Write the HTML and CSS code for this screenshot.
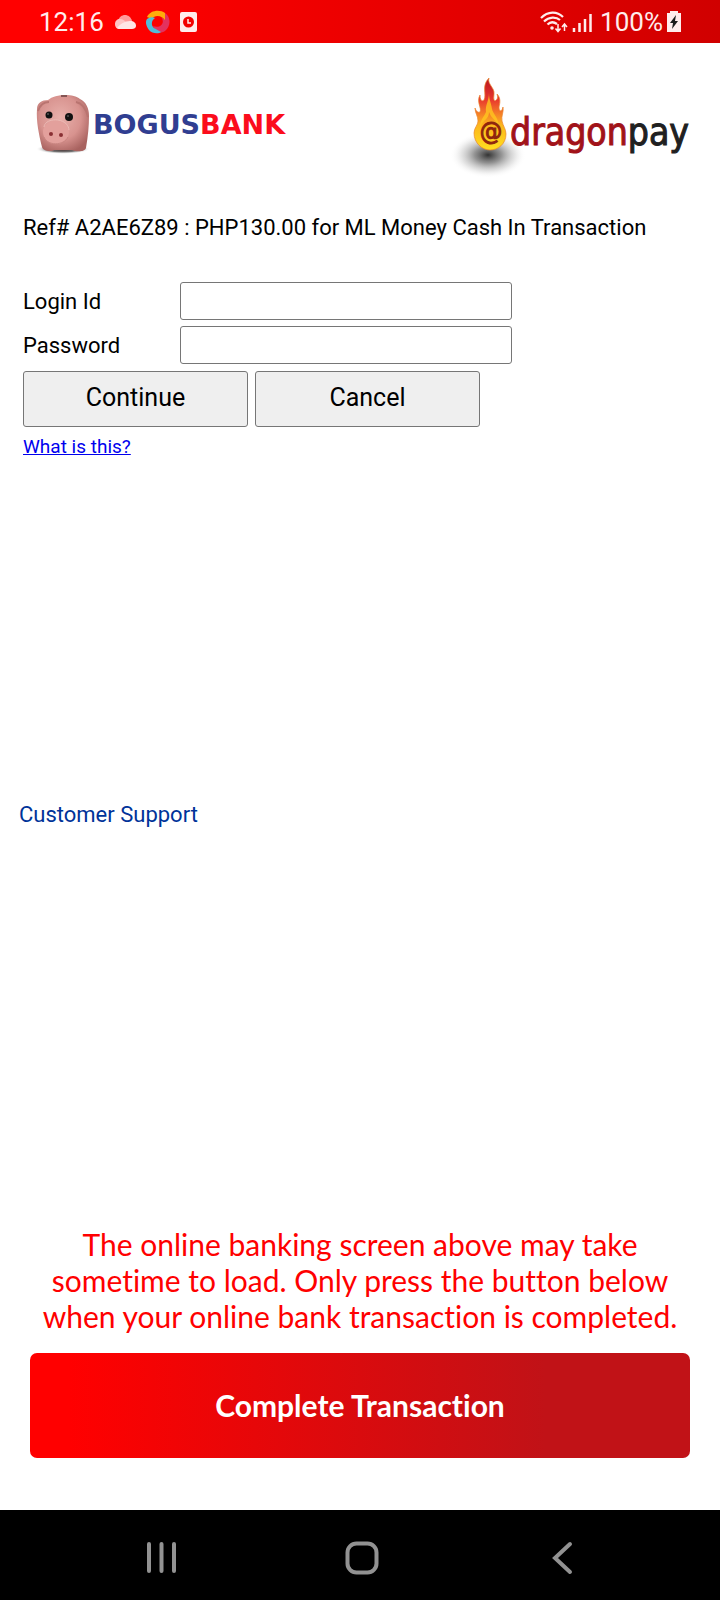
FILE: index.html
```html
<!DOCTYPE html>
<html lang="en">
<head>
<meta charset="utf-8">
<meta name="viewport" content="width=device-width, initial-scale=1">
<title>Bogus Bank - Dragonpay</title>
<link rel="stylesheet" href="styles.css">
</head>
<body>
<div class="status">
  <div class="status-left">
    <span>12:16</span>
    <svg width="22" height="16" viewBox="0 0 22 16" aria-hidden="true">
      <path d="M4 7C5 3 8 1 11 1s6 2 7 6l-7 5z" fill="#ff9b9b"/>
      <path d="M1 10c0-3 2-5 5-5 3 0 5 2 7 4l-8 6c-3 0-4-3-4-5z" fill="#ffc4c4"/>
      <path d="M3 14c3-4 8-7 13-7 4 0 6 2 6 5 0 2-2 3-4 3H5z" fill="#ffe6e6"/>
    </svg>
    <svg width="24" height="24" viewBox="0 0 24 24" aria-hidden="true">
      <path d="M1 7C4 0 14-1 19 3l0 8C17 6 9 4 6 9z" fill="#ffac0b"/>
      <path d="M19 3c6 4 6 13 0 18-3 2-6 2-8 1l-4-6c7 3 13-3 8-9l4 3z" fill="#e3325f"/>
      <path d="M1 9c3-2 6-2 8-1-4 3-4 7-1 10l7 4c-2 2-9 2-12-2C0 16-1 12 1 9z" fill="#50bdd8"/>
    </svg>
    <svg width="17" height="20" viewBox="0 0 17 20" aria-hidden="true">
      <rect width="17" height="20" rx="2" fill="#ffecec"/>
      <circle cx="8.500" cy="10" r="5.500" fill="#f20000"/>
      <path d="M8 7v4h3" fill="none" stroke="#ffecec" stroke-width="1.500"/>
    </svg>
  </div>
  <div class="status-right">
    <svg width="52" height="22" viewBox="0 0 52 22" aria-hidden="true" fill="none" stroke="#ffecec" stroke-width="2.200">
      <path d="M1 7C8 0 17 0 23 6M4 10.500C9 5.500 16 5.500 20 9M7.500 13.500c3-3 6-3 9.500-.500"/>
      <circle cx="12" cy="17" r="1.800" fill="#ffecec" stroke="none"/>
      <path d="M18 13v7M15.500 17.500l2.500 3 2.500-3M24.500 20v-7M22 16l2.500-3 2.500 3" stroke-width="1.500"/>
      <path d="M34 21v-4M39.500 21v-9M45 21V8M50.500 21V3" stroke-width="2.500"/>
    </svg>
    <span>100%</span>
    <svg class="battery" width="14" height="21" viewBox="0 0 14 21" aria-hidden="true">
      <path d="M3 0h8v2h3v19H0V2h3z" fill="#ffecec"/>
      <path d="M9 4L3 12h3l-1 6 6-8H8z" fill="#191919"/>
    </svg>
  </div>
</div>

<main class="page">
  <header class="logos">
    <svg class="logo" width="290" height="90" viewBox="0 0 290 90" role="img" aria-label="Bogus Bank">
      <defs>
        <radialGradient id="pig" cx=".45" cy=".4" r=".65">
          <stop offset="0" stop-color="#e8b0ab"/><stop offset=".6" stop-color="#d8938f"/><stop offset="1" stop-color="#a8625f"/>
        </radialGradient>
        <radialGradient id="shade"><stop offset="0" stop-color="#3a1f1f"/><stop offset=".6" stop-color="#777"/><stop offset="1" stop-color="#fff" stop-opacity="0"/></radialGradient>
      </defs>
      <ellipse cx="43" cy="69" rx="27" ry="5" fill="url(#shade)"/>
      <path d="M17 29c0-6 5-9 11-9 7-6 25-7 32-1 6 3 9 9 9 17 0 10-1 20-3 32-1 4-10 4-14 2H34c-3 2-11 1-12-3-3-12-6-26-5-38z" fill="url(#pig)"/>
      <path d="M18 31c2-6 6-9 11-9M56 22c6 1 10 7 12 15" fill="none" stroke="#b97470" stroke-width="2"/>
      <path d="M41 16h6" stroke="#694040" stroke-width="1.500"/>
      <ellipse cx="36" cy="52" rx="13" ry="12" fill="#e3a09c"/>
      <path d="M24 47c1-10 24-10 25 3" fill="none" stroke="#ecbab5" stroke-width="1"/>
      <path d="M24 57c3 9 20 9 24 0" fill="none" stroke="#c98581" stroke-width="1"/>
      <circle cx="29" cy="35" r="3.500" fill="#111"/><circle cx="49" cy="37" r="4" fill="#111"/>
      <circle cx="28" cy="34" r=".700" fill="#999"/><circle cx="48" cy="36" r=".700" fill="#999"/>
      <circle cx="31" cy="54" r="2" fill="#892f33"/><circle cx="41" cy="55" r="2" fill="#892f33"/>
      <text class="bank-name" x="73" y="54"><tspan fill="#303e91">BOGUS</tspan><tspan fill="#fb0d1c">BANK</tspan></text>
    </svg>
    <svg class="logo" width="270" height="130" viewBox="0 0 270 130" role="img" aria-label="dragonpay">
      <defs>
        <linearGradient id="flame" x1="0" y1="0" x2="0" y2="1">
          <stop offset="0" stop-color="#b91520"/><stop offset=".3" stop-color="#e8382e"/><stop offset=".5" stop-color="#f58027"/><stop offset=".65" stop-color="#fcb51d"/><stop offset="1" stop-color="#ffdf20"/>
        </linearGradient>
        <radialGradient id="glow"><stop offset="0" stop-color="#333"/><stop offset=".35" stop-color="#777" stop-opacity=".800"/><stop offset=".7" stop-color="#bbb" stop-opacity=".400"/><stop offset="1" stop-color="#fff" stop-opacity="0"/></radialGradient>
      </defs>
      <ellipse cx="48" cy="95" rx="38" ry="23" fill="url(#glow)"/>
      <path d="M49 18c-2 6 6 10 5 16 0 3-1 5 1 7 3-2 3-4 2-7 4 4 3 9 2 13 0 3 1 5 3 3l1-3c1 5-2 9-1 14 1 5 4 8 4 13 0 10-8 16-16 16S34 83 34 73c0-5 4-8 4-12 0-5-3-8-3-13 1 3 3 5 5 4 2-4-4-10 0-17 0 5 2 7 4 5 3-6-3-14 5-22z" fill="url(#flame)" stroke="#e9852d" stroke-width=".700"/>
      <path d="M49 33c0 8-4 12-3 19-2 5-6 8-6 15 4-8 9-8 9-15 2 6 7 8 10 14-1-9-6-12-7-17-1-7-3-9-3-16z" fill="#ffc51f" opacity=".800"/>
      <text class="at" x="51" y="80" text-anchor="middle">@</text>
      <text class="pay-name" x="70" y="85"><tspan class="dragon">dragon</tspan><tspan class="pay">pay</tspan></text>
    </svg>
  </header>

  <form class="login">
    <p class="ref">Ref# A2AE6Z89 : PHP130.00 for ML Money Cash In Transaction</p>
    <div class="field"><label for="login">Login Id</label><input id="login" type="text"></div>
    <div class="field"><label for="password">Password</label><input id="password" type="password"></div>
    <div class="actions"><button type="button">Continue</button><button type="button">Cancel</button></div>
    <a class="what" href="#">What is this?</a>
  </form>
  <a class="support" href="#">Customer Support</a>

  <section class="complete">
    <p>The online banking screen above may take sometime to load. Only press the button below when your online bank transaction is completed.</p>
    <button type="button">Complete Transaction</button>
  </section>
</main>

<nav class="system">
  <button type="button" aria-label="Recent apps"><svg width="34" height="34" viewBox="0 0 34 34"><path d="M4 3v27M16.500 3v27M29 3v27"/></svg></button>
  <button type="button" aria-label="Home"><svg width="34" height="34" viewBox="0 0 34 34"><rect x="2.500" y="2.500" width="29" height="29" rx="9"/></svg></button>
  <button type="button" aria-label="Back"><svg width="34" height="34" viewBox="0 0 34 34"><path d="M25 3L10 17l15 14"/></svg></button>
</nav>
</body>
</html>
```
FILE: styles.css
```css
* { box-sizing: border-box; }

body {
  margin: 0;
  min-height: 100vh;
  display: flex;
  flex-direction: column;
  background: #fff;
  color: #000;
  font: 22px/28px Roboto, sans-serif;
}

p { margin: 0; }

.status {
  height: 43px;
  padding: 0 39px;
  display: flex;
  justify-content: space-between;
  background: linear-gradient(90deg, #f00 15%, #d00000);
  color: #ffecec;
  font-size: 26px;
}

.status-left, .status-right { display: flex; align-items: center; }
.status-left { gap: 10px; }
.status-right { gap: 8px; }
.status-right .battery { margin-left: -4px; }

.page { flex: 1; display: flex; flex-direction: column; }

.logos {
  padding: 17px 10px 0 20px;
  display: flex;
  align-items: center;
  justify-content: space-between;
}

.logo { display: block; }
.bank-name { font: bold 27px "DejaVu Sans", sans-serif; }
.pay-name {
  font: 37px "DejaVu Sans Condensed", "DejaVu Sans", sans-serif;
  stroke-width: 1;
}
.dragon { fill: #a11219; stroke: #a11219; }
.pay { fill: #202020; stroke: #202020; }
.at {
  fill: #8f250d;
  font: 25px "DejaVu Sans Condensed", "DejaVu Sans", sans-serif;
  stroke: #8f250d;
  stroke-width: 1;
}

.login { padding: 24px 23px 0; }
.ref { margin-bottom: 40px; }

.field {
  display: grid;
  grid-template-columns: 157px minmax(0, 332px);
  align-items: center;
  margin-bottom: 6px;
}

.field label { padding-top: 2px; }

.field input {
  height: 38px;
  padding: 2px 6px;
  border: 1px solid #767676;
  border-radius: 3px;
  font: inherit;
}

.actions { display: flex; gap: 7px; padding-top: 1px; }

.actions button {
  flex: 0 1 225px;
  height: 56px;
  padding: 0 0 2px;
  border: 1px solid #767676;
  border-radius: 3px;
  background: #efefef;
  color: #000;
  font: 25px/28px Roboto, sans-serif;
}

.what {
  display: block;
  width: fit-content;
  margin-top: 6px;
  color: #00e;
  font-size: 19px;
}

.support {
  width: fit-content;
  margin: 340px 19px 0;
  color: #039;
  text-decoration: none;
}

.complete {
  margin-top: auto;
  padding: 24px 30px 52px;
  font: 30px/36px Lato, sans-serif;
  font-variant-ligatures: none;
  text-align: center;
}

.complete p { color: #f00; }

.complete button {
  width: 100%;
  height: 105px;
  margin-top: 19px;
  padding: 0 0 2px;
  border: 0;
  border-radius: 7px;
  background: linear-gradient(90deg, #f00 6%, #c11217 78%);
  color: #fff;
  font: bold 30px/36px Lato, sans-serif;
  font-variant-ligatures: none;
}

.system {
  height: 90px;
  padding: 0 58px 0 62px;
  display: flex;
  align-items: center;
  background: #000;
}

.system button {
  flex: 1;
  padding: 8px 0 0;
  border: 0;
  background: none;
}

.system svg {
  fill: none;
  stroke: #929292;
  stroke-width: 4;
  stroke-linecap: round;
}
```
